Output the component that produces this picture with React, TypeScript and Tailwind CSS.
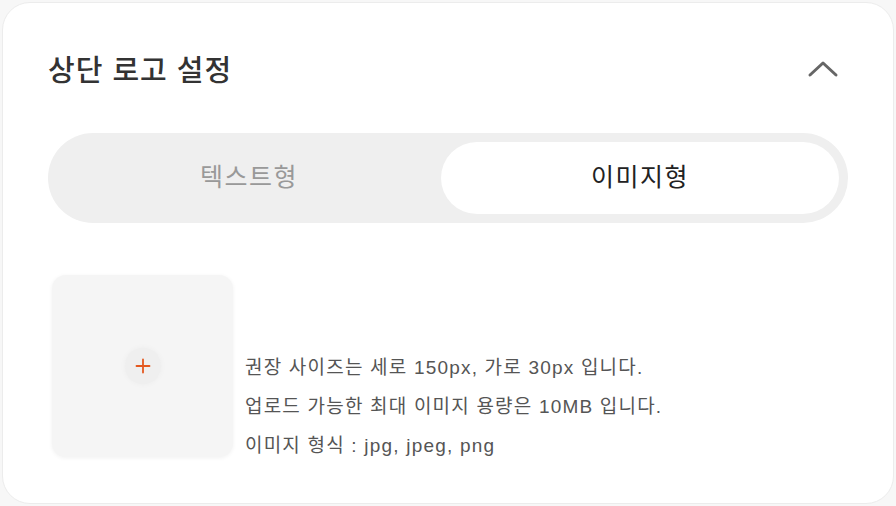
import React from "react";

export default function App() {
  return (
    <div
      className="w-[896px] h-[506px] bg-[#f7f7f7] p-[2px]"
      style={{ fontFamily: '"Liberation Sans", "Noto Sans CJK KR", sans-serif' }}
    >
      <div className="h-[502px] rounded-[28px] bg-white border border-[#ececec] px-[45px] pt-[46px]">
        <div className="flex items-center justify-between h-[46px]">
          <h2 className="text-[29px] font-medium text-[#333] tracking-[1px]">상단 로고 설정</h2>
          <svg width="32" height="20" viewBox="0 0 32 20" className="mr-[9px] mt-[-6px]">
            <path d="M3 16 L16 4 L29 16" fill="none" stroke="#666" strokeWidth="3" strokeLinecap="round" strokeLinejoin="round" />
          </svg>
        </div>
        <div className="mt-[38px] h-[90px] w-[800px] rounded-full bg-[#efefef] p-[9px] flex">
          <button className="flex-1 rounded-full text-[25px] tracking-[1.5px] text-[#999] flex items-center justify-center">텍스트형</button>
          <button className="w-[398px] rounded-full bg-white text-[25px] tracking-[1.5px] text-[#222] flex items-center justify-center">이미지형</button>
        </div>
        <div className="mt-[52px] flex items-end">
          <div className="ml-[4px] w-[181px] h-[182px] rounded-[14px] bg-[#f5f5f5] shadow-[0_1px_4px_rgba(0,0,0,0.06)] flex items-center justify-center">
            <div className="w-[36px] h-[36px] rounded-full bg-[#efefef] flex items-center justify-center shadow-[0_0_6px_rgba(0,0,0,0.04)]">
              <svg width="16" height="16" viewBox="0 0 16 16">
                <path d="M8 1.5 V14.5 M1.5 8 H14.5" stroke="#e4581f" strokeWidth="1.8" strokeLinecap="round" />
              </svg>
            </div>
          </div>
          <div className="ml-[12px] mb-[-8px] text-[19px] tracking-[1.2px] text-[#555] leading-[39px]">
            <p>권장 사이즈는 세로 150px, 가로 30px 입니다.</p>
            <p>업로드 가능한 최대 이미지 용량은 10MB 입니다.</p>
            <p>이미지 형식 : jpg, jpeg, png</p>
          </div>
        </div>
      </div>
    </div>
  );
}
